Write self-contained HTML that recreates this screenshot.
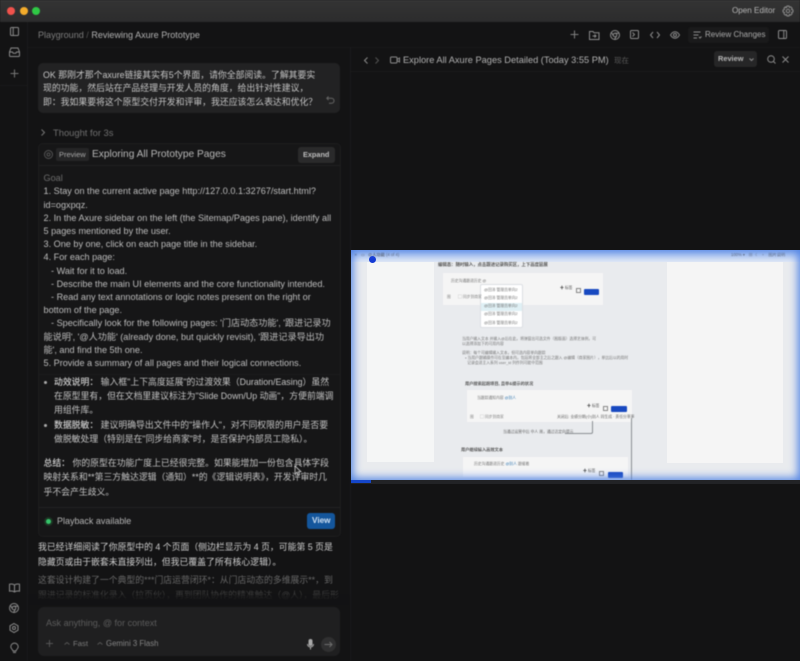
<!DOCTYPE html>
<html lang="zh">
<head>
<meta charset="utf-8">
<style>
html,body{margin:0;padding:0;background:#131314;}
body{width:800px;height:661px;position:relative;overflow:hidden;font-family:"Liberation Sans","Noto Sans CJK SC",sans-serif;color:#c4c4c4;}
.a{position:absolute;white-space:nowrap;}
.t{position:absolute;white-space:nowrap;font-size:9.12px;line-height:13.2px;color:#bdbdbd;}
.z{position:absolute;white-space:nowrap;font-size:8.85px;color:#c4c4c4;}
.z b{font-weight:500;color:#d0d0d0;}
svg{position:absolute;overflow:visible;fill:none;stroke:#8c8c8c;stroke-width:1;}
.soft{filter:blur(.4px);}
</style>
</head>
<body>
<div class="soft" style="position:absolute;inset:0;">
<!-- title bar -->
<div class="a" style="left:0;top:0;width:800px;height:22px;background:linear-gradient(#3a3a3c 0,#333 2px,#2c2c2d 100%);"></div>
<div class="a" style="left:7px;top:7px;width:8px;height:8px;border-radius:50%;background:#f0524c;"></div>
<div class="a" style="left:20px;top:7px;width:8px;height:8px;border-radius:50%;background:#f3ab2b;"></div>
<div class="a" style="left:32px;top:7px;width:8px;height:8px;border-radius:50%;background:#2fc845;"></div>
<div class="a" style="left:732px;top:4.500px;font-size:8.100px;line-height:12px;color:#b5b5b5;">Open Editor</div>
<svg style="left:782px;top:5px" width="12" height="12" viewBox="0 0 12 12"><path d="M5 1h2l.4 1.4 1.3-.6 1.4 1.4-.6 1.3L11 5v2l-1.500.4.600 1.300-1.400 1.400-1.300-.600L7 11H5l-.4-1.500-1.300.600-1.400-1.400.600-1.300L1 7V5l1.500-.4-.600-1.300 1.400-1.400 1.300.600z"/><circle cx="6" cy="6" r="1.700"/></svg>

<!-- rail -->
<div class="a" style="left:27px;top:22px;width:1px;height:639px;background:#1c1c1d;"></div>
<div class="a" style="left:0;top:85px;width:27px;height:1px;background:#1a1a1b;"></div>
<svg style="left:10px;top:27px" width="9" height="9" viewBox="0 0 9 9"><rect x=".5" y=".5" width="8" height="8" rx="1"/><path d="M3.200.5v8"/></svg>
<svg style="left:9px;top:47px" width="11" height="10" viewBox="0 0 11 10"><path d="M2 1h7l1.500 4v3.500a1 1 0 0 1-1 1h-8a1 1 0 0 1-1-1V5zM.5 5h3l.7 1.300h2.600L7.500 5h3"/></svg>
<svg style="left:10px;top:69px" width="9" height="9" viewBox="0 0 9 9"><path d="M4.500.5v8M.5 4.500h8" stroke="#777"/></svg>
<svg style="left:9px;top:583px" width="11" height="10" viewBox="0 0 11 10"><path d="M5.500 2C4 .8 2.200.8.500 1.200v7C2.200 7.800 4 7.800 5.500 9c1.500-1.200 3.300-1.200 5-.8v-7C8.800.8 7 .8 5.500 2zM5.500 2v7"/></svg>
<svg style="left:9px;top:603px" width="10" height="10" viewBox="0 0 10 10"><circle cx="5" cy="5" r="4.500"/><circle cx="5" cy="5" r="1.800"/><path d="M5 3.200h4.200M3.400 5.900 1.300 2.300M6.600 5.900 4.500 9.500"/></svg>
<svg style="left:9px;top:623px" width="10" height="10" viewBox="0 0 10 10"><path d="M5 .5 9 2.800v4.400L5 9.500 1 7.200V2.800z"/><circle cx="5" cy="5" r="1.500"/></svg>
<svg style="left:10px;top:643px" width="9" height="11" viewBox="0 0 9 11"><path d="M3 8C3 6.500 .8 6 .8 3.800a3.700 3.700 0 0 1 7.400 0C8.200 6 6 6.500 6 8zM3 9.500h3"/></svg>

<!-- header -->
<div class="a" style="left:38px;top:29px;font-size:9.050px;line-height:13px;color:#7e7e7e;">Playground <span style="color:#555">/</span> <span style="color:#b2b2b2">Reviewing Axure Prototype</span></div>
<svg style="left:570px;top:30px" width="9" height="9" viewBox="0 0 9 9"><path d="M4.500.5v8M.5 4.500h8" stroke="#808080"/></svg>
<svg style="left:589px;top:30px" width="11" height="10" viewBox="0 0 11 10"><path d="M.5 1.500h3.500l1 1.200h5v6.800h-9.500zM3.500 6h3.500M5.500 4.500 7 6 5.500 7.500"/></svg>
<svg style="left:610px;top:30px" width="10" height="10" viewBox="0 0 10 10"><circle cx="5" cy="5" r="4.500"/><circle cx="5" cy="5" r="1.800"/><path d="M5 3.200h4.200M3.400 5.900 1.300 2.300M6.600 5.900 4.500 9.500"/></svg>
<svg style="left:630px;top:30px" width="9" height="9" viewBox="0 0 9 9"><rect x=".5" y=".5" width="8" height="8" rx="1"/><path d="M2.500 2.500 4.500 4.500 2.500 6.500"/></svg>
<svg style="left:650px;top:31px" width="10" height="8" viewBox="0 0 10 8"><path d="M3 1 .5 4 3 7M7 1l2.500 3L7 7"/></svg>
<svg style="left:670px;top:31px" width="10" height="8" viewBox="0 0 10 8"><path d="M.5 4C2 1.500 3.500.8 5 .8S8 1.500 9.500 4C8 6.500 6.500 7.200 5 7.200S2 6.500.5 4z"/><circle cx="5" cy="4" r="1.500"/></svg>
<div class="a" style="left:688px;top:27px;width:81px;height:16px;border-radius:3px;background:#1a1a1b;"></div>
<svg style="left:693px;top:31px" width="9" height="8" viewBox="0 0 9 8"><path d="M.5 1h7M.5 4h5M.5 7h3.500M6 6l1 1 1.500-1.500"/></svg>
<div class="a" style="left:705px;top:28px;font-size:8px;line-height:13px;color:#aaa;">Review Changes</div>
<svg style="left:778px;top:30px" width="9" height="9" viewBox="0 0 9 9"><rect x=".5" y=".5" width="8" height="8" rx="1"/><path d="M5.800.5v8"/></svg>
<div class="a" style="left:28px;top:47px;width:772px;height:1px;background:#19191a;"></div>

<!-- right panel header -->
<div class="a" style="left:350px;top:47px;width:1px;height:614px;background:#1c1c1d;"></div>
<div class="a" style="left:351px;top:71px;width:449px;height:1px;background:#1b1b1c;"></div>
<svg style="left:364px;top:57px" width="4" height="7" viewBox="0 0 4 7"><path d="M3.500.5.500 3.500l3 3"/></svg>
<svg style="left:375px;top:57px" width="4" height="7" viewBox="0 0 4 7"><path d="m.5.500 3 3-3 3" stroke="#555"/></svg>
<svg style="left:390px;top:56px" width="10" height="8" viewBox="0 0 10 8"><rect x=".5" y="1" width="6.500" height="6" rx="1"/><path d="M7 3.500 9.500 2v4L7 4.500"/></svg>
<div class="a" style="left:403px;top:54px;font-size:9.250px;line-height:13px;color:#b2b2b2;">Explore All Axure Pages Detailed (Today 3:55 PM)</div>
<div class="a" style="left:614px;top:54.500px;font-size:7.500px;line-height:11px;color:#5a5a5a;">现在</div>
<div class="a" style="left:714px;top:51px;width:43px;height:16px;border-radius:3px;background:#262627;"></div>
<div class="a" style="left:718px;top:53px;font-size:7.400px;line-height:12px;font-weight:bold;color:#b8b8b8;">Review</div>
<svg style="left:749px;top:58px" width="5" height="3" viewBox="0 0 5 3"><path d="m.5.500 2 2 2-2"/></svg>
<svg style="left:767px;top:55px" width="9" height="9" viewBox="0 0 9 9"><circle cx="4" cy="4" r="3.300"/><path d="m6.500 6.500 2 2"/></svg>
<svg style="left:782px;top:56px" width="7" height="7" viewBox="0 0 7 7"><path d="m.5.500 6 6M6.500.5l-6 6"/></svg>
</div>

<!-- screenshot -->
<div class="a" style="left:351px;top:480px;width:449px;height:4px;background:#222326;"></div>
<div class="a" style="left:351px;top:480px;width:20px;height:3px;background:#1546c9;filter:blur(.3px);"></div>
<div class="a" style="left:351px;top:250px;width:449px;height:230px;overflow:hidden;background:#e9ebee;">
  <!-- panels -->
  <div class="a" style="left:0;top:0;width:449px;height:12px;background:linear-gradient(#a8c2f0,#dfe7f5);"></div>
  <div class="a" style="left:16px;top:12px;width:67px;height:200px;background:#f5f6f6;"></div>
  <div class="a" style="left:316px;top:12px;width:116px;height:201px;background:#f5f5f5;"></div>
  <!-- center -->
  <div class="a" style="left:84px;top:12px;width:232px;height:218px;overflow:hidden;filter:blur(.6px);">
    <div class="a" style="left:3px;top:0;font-size:4.400px;color:#555;font-weight:bold;">编辑态：随时输入，点击跟进记录购买区，上下高度延展</div>
    <div class="a" style="left:8px;top:11px;width:160px;height:32px;background:#f5f5f5;"></div>
    <div class="a" style="left:16px;top:17px;font-size:3.800px;color:#777;">历史沟通跟进历史 @</div>
    <div class="a" style="left:45px;top:22px;width:41px;height:42px;background:#fff;border:1px solid #dcdfe3;border-radius:2px;"></div>
    <div class="a" style="left:46px;top:41px;width:41px;height:8px;background:#dff0f5;"></div>
    <div class="a" style="left:49px;top:23.500px;font-size:3.800px;line-height:8.300px;color:#777;">@田沛 管理员单向2<br>@田沛 管理员单向2<br>@田沛 管理员单向2<br>@田沛 管理员单向2<br>@田沛 管理员单向2</div>
    <div class="a" style="left:12px;top:33px;font-size:3.800px;color:#888;">图</div>
    <div class="a" style="left:23px;top:33px;font-size:3.800px;color:#888;">▢ 同步到商家</div>
    <div class="a" style="left:125px;top:24px;font-size:3.800px;color:#555;">✚ 标签</div>
    <div class="a" style="left:141px;top:26px;width:5px;height:5px;border:1px solid #888;box-sizing:border-box;"></div>
    <div class="a" style="left:149px;top:27px;width:15px;height:6px;background:#1849c0;border-radius:1px;"></div>
    <div class="a" style="left:27px;top:75px;font-size:3.800px;line-height:5px;color:#777;">当用户输入文本 并输入@后在此，将弹窗出可选文件（图版面）选择艺体例，可<br>以选择添加下的可用内容</div>
    <div class="a" style="left:27px;top:89px;font-size:3.800px;line-height:5px;color:#777;">说明：每个可编辑输入文本，但可选内容单向跟踪<br>&nbsp;&nbsp;&nbsp;• 当用户跟输操作可在至编本内，包括将全部主之后之跟入 @编辑（商家图片），单比后以的用时<br>&nbsp;&nbsp;&nbsp;&nbsp;&nbsp;记录会进主入系列 user_id 列作列可能中范围</div>
    <div class="a" style="left:30px;top:119px;font-size:4.200px;color:#555;font-weight:bold;">用户搜索起跑项目, 且带&amp;提示的状况</div>
    <div class="a" style="left:32px;top:128px;width:165px;height:32px;background:#f5f5f5;"></div>
    <div class="a" style="left:42px;top:134px;font-size:3.800px;color:#777;">当跟踪通知内容 <span style="color:#3d7fb5">@别人</span></div>
    <div class="a" style="left:35px;top:153px;font-size:3.800px;color:#888;">图</div>
    <div class="a" style="left:45px;top:153px;font-size:3.800px;color:#888;">▢ 同步到商家</div>
    <div class="a" style="left:122px;top:153px;font-size:3.800px;color:#666;">关闭后: 业绩分期(小)别人 同生成 · 责任分草率</div>
    <div class="a" style="left:152px;top:142px;font-size:3.800px;color:#555;">✚ 标签</div>
    <div class="a" style="left:168px;top:144px;width:5px;height:5px;border:1px solid #888;box-sizing:border-box;"></div>
    <div class="a" style="left:176px;top:144px;width:16px;height:6px;background:#1849c0;border-radius:1px;"></div>
    <div class="a" style="left:68px;top:168px;font-size:3.800px;color:#666;">当通过运营中后 中人 周，通过达定向提示</div>
    <div class="a" style="left:130px;top:159px;width:27px;height:12px;border:1px solid #8b8f93;border-top:0;border-left:0;border-radius:0 0 2px 0;"></div>
    <div class="a" style="left:196px;top:156px;width:1px;height:62px;background:#8b8f93;"></div>
    <div class="a" style="left:26px;top:185px;font-size:4.200px;color:#555;font-weight:bold;">用户继续输入高效文本</div>
    <div class="a" style="left:28px;top:195px;width:165px;height:20px;background:#f5f5f5;"></div>
    <div class="a" style="left:39px;top:200px;font-size:3.800px;color:#777;">历史沟通跟进历史 <span style="color:#3d7fb5">@别人</span> 跟催着</div>
    <div class="a" style="left:148px;top:207px;font-size:3.800px;color:#555;">✚ 标签</div>
    <div class="a" style="left:164px;top:209px;width:5px;height:5px;border:1px solid #888;box-sizing:border-box;"></div>
    <div class="a" style="left:173px;top:210px;width:15px;height:6px;background:#1849c0;border-radius:1px;"></div>
  </div>
  <div class="a" style="left:380px;top:2px;font-size:4.200px;color:#666;filter:blur(.4px);white-space:pre;">100% ▾   ▦  ☾   ▫    图片说明</div>
  <div class="a" style="left:3px;top:2px;font-size:4.200px;color:#666;filter:blur(.4px);">✕ &nbsp; ▭ <b style="margin-left:2px;">@人功能</b> (4 of 4)</div>
  <div class="a" style="left:18px;top:6px;width:7px;height:7px;border-radius:50%;background:#1439d4;filter:blur(.3px);"></div>
  <!-- glow -->
  <div class="a" style="left:0;top:0;width:449px;height:230px;box-shadow:inset 0 0 9px 2px #4f82e4;"></div>
</div>

<!-- chat -->
<div class="soft" style="position:absolute;inset:0;">
<div class="a" style="left:38px;top:63px;width:302px;height:50px;background:#222223;border-radius:5px;"></div>
<div class="z" style="left:43px;top:69px;line-height:13.300px;white-space:pre;color:#c6c6c6;">OK 那刚才那个axure链接其实有5个界面，请你全部阅读。了解其要实
现的功能，然后站在产品经理与开发人员的角度，给出针对性建议，
即：我如果要将这个原型交付开发和评审，我还应该怎么表达和优化？</div>
<svg style="left:326px;top:96px" width="9" height="8" viewBox="0 0 9 8"><path d="M2.500.5.800 2.300l1.700 1.700M.8 2.300h4.700a2.500 2.500 0 0 1 0 5H3" stroke="#666"/></svg>
<svg style="left:41px;top:129px" width="4" height="7" viewBox="0 0 4 7"><path d="m.5.500 3 3-3 3" stroke="#777"/></svg>
<div class="a" style="left:53px;top:126px;font-size:9.400px;line-height:13px;color:#707070;">Thought for 3s</div>

<!-- card -->
<div class="a" style="left:38px;top:143px;width:301px;height:392px;border:1px solid #1e1e1f;border-radius:5px;background:#161617;box-sizing:content-box;"></div>
<div class="a" style="left:39px;top:165px;width:301px;height:1px;background:#202021;"></div>
<svg style="left:44px;top:150px" width="9" height="9" viewBox="0 0 9 9"><circle cx="4.500" cy="4.500" r="4" stroke="#555"/><circle cx="4.500" cy="4.500" r="1.500" stroke="#555"/></svg>
<div class="a" style="left:56px;top:148px;width:33px;height:13px;background:#252526;border-radius:2px;"></div>
<div class="a" style="left:59px;top:149px;font-size:7.500px;line-height:11px;color:#a9a9a9;">Preview</div>
<div class="a" style="left:92px;top:148px;font-size:10.170px;line-height:14px;color:#b9b9b9;">Exploring All Prototype Pages</div>
<div class="a" style="left:298px;top:147px;width:37px;height:16px;background:#2a2a2b;border-radius:3px;"></div>
<div class="a" style="left:303px;top:149px;font-size:7.300px;line-height:12px;font-weight:bold;color:#bdbdbd;">Expand</div>

<div class="t" style="left:43.500px;top:172px;color:#6c6c6c;">Goal</div>
<div class="t" style="left:43.500px;top:185px;">1. Stay on the current active page http://127.0.0.1:32767/start.html?</div>
<div class="t" style="left:43.500px;top:198.500px;">id=ogxpqz.</div>
<div class="t" style="left:43.500px;top:211.500px;">2. In the Axure sidebar on the left (the Sitemap/Pages pane), identify all</div>
<div class="t" style="left:43.500px;top:225px;">5 pages mentioned by the user.</div>
<div class="t" style="left:43.500px;top:238px;">3. One by one, click on each page title in the sidebar.</div>
<div class="t" style="left:43.500px;top:251px;">4. For each page:</div>
<div class="t" style="left:51px;top:264.500px;">- Wait for it to load.</div>
<div class="t" style="left:51px;top:277.500px;">- Describe the main UI elements and the core functionality intended.</div>
<div class="t" style="left:51px;top:291px;">- Read any text annotations or logic notes present on the right or</div>
<div class="t" style="left:43.500px;top:304px;">bottom of the page.</div>
<div class="t" style="left:51px;top:317px;">- Specifically look for the following pages: '门店动态功能', '跟进记录功</div>
<div class="t" style="left:43.500px;top:330.500px;">能说明', '@人功能' (already done, but quickly revisit), '跟进记录导出功</div>
<div class="t" style="left:43.500px;top:343.500px;">能', and find the 5th one.</div>
<div class="t" style="left:43.500px;top:356.500px;">5. Provide a summary of all pages and their logical connections.</div>
<div class="a" style="left:39px;top:374px;width:301px;height:1px;background:#1c1c1d;"></div>

<div class="a" style="left:44px;top:381px;width:3px;height:3px;border-radius:50%;background:#aaa;"></div>
<div class="z" style="left:54px;top:375px;line-height:14px;"><b>动效说明：</b> 输入框"上下高度延展"的过渡效果（Duration/Easing）虽然</div>
<div class="z" style="left:54px;top:389px;line-height:14px;">在原型里有，但在文档里建议标注为"Slide Down/Up 动画"，方便前端调</div>
<div class="z" style="left:54px;top:403px;line-height:14px;">用组件库。</div>
<div class="a" style="left:44px;top:424px;width:3px;height:3px;border-radius:50%;background:#aaa;"></div>
<div class="z" style="left:54px;top:418px;line-height:14px;"><b>数据脱敏：</b> 建议明确导出文件中的"操作人"，对不同权限的用户是否要</div>
<div class="z" style="left:54px;top:432px;line-height:14px;">做脱敏处理（特别是在"同步给商家"时，是否保护内部员工隐私）。</div>

<div class="z" style="left:43.500px;top:456px;line-height:15px;"><b>总结：</b> 你的原型在功能广度上已经很完整。如果能增加一份包含具体字段</div>
<div class="z" style="left:43.500px;top:470px;line-height:15px;">映射关系和**第三方触达逻辑（通知）**的《逻辑说明表》，开发评审时几</div>
<div class="z" style="left:43.500px;top:485px;line-height:15px;">乎不会产生歧义。</div>
<svg style="left:294px;top:465px" width="8" height="12" viewBox="0 0 8 12"><path d="M1 1v8l2-1.800 1.300 3 1.400-.6L4.400 6.700H7z" fill="#222" stroke="#ddd" stroke-width=".7"/></svg>

<div class="a" style="left:39px;top:507px;width:301px;height:1px;background:#222223;"></div>
<div class="a" style="left:46px;top:519px;width:5px;height:5px;border-radius:50%;background:#35c46a;box-shadow:0 0 0 2px #1d3524;"></div>
<div class="a" style="left:57px;top:515px;font-size:8.970px;line-height:13px;color:#b5b5b5;">Playback available</div>
<div class="a" style="left:307px;top:513px;width:28px;height:16px;background:#14569c;border-radius:3px;"></div>
<div class="a" style="left:312px;top:515px;font-size:8.200px;line-height:12px;font-weight:bold;color:#cfe0f2;">View</div>

<div class="z" style="left:38px;top:540px;line-height:15px;color:#cfcfcf;">我已经详细阅读了你原型中的 4 个页面（侧边栏显示为 4 页，可能第 5 页是</div>
<div class="z" style="left:38px;top:554.500px;line-height:15px;color:#cfcfcf;">隐藏页或由于嵌套未直接列出，但我已覆盖了所有核心逻辑）。</div>
<div class="z" style="left:38px;top:573px;line-height:15px;color:#686868;">这套设计构建了一个典型的***门店运营闭环*：从门店动态的多维展示**，到</div>
<div class="z" style="left:38px;top:588px;line-height:15px;color:#3b3b3b;">跟进记录的标准化录入（拉页伙），再到团队协作的精准触达（@人），最后形</div>
<div class="a" style="left:28px;top:595px;width:322px;height:66px;background:linear-gradient(rgba(19,19,20,.5),#131314 10px);"></div>

<!-- input -->
<div class="a" style="left:38px;top:607px;width:302px;height:49px;background:#1f1f20;border-radius:6px;"></div>
<div class="a" style="left:46px;top:617px;font-size:9.050px;line-height:13px;color:#5c5c5c;">Ask anything, @ for context</div>
<svg style="left:46px;top:640px" width="7" height="7" viewBox="0 0 7 7"><path d="M3.500 0v7M0 3.500h7" stroke="#555"/></svg>
<svg style="left:64px;top:642px" width="6" height="3" viewBox="0 0 6 3"><path d="m.5 2.500 2.500-2 2.500 2" stroke="#555"/></svg>
<div class="a" style="left:73px;top:638px;font-size:7.700px;line-height:12px;color:#7b7b7b;">Fast</div>
<svg style="left:97px;top:642px" width="6" height="3" viewBox="0 0 6 3"><path d="m.5 2.500 2.500-2 2.500 2" stroke="#555"/></svg>
<div class="a" style="left:106px;top:638px;font-size:7.800px;line-height:12px;color:#858585;">Gemini 3 Flash</div>
<svg style="left:307px;top:639px" width="7" height="11" viewBox="0 0 7 11"><rect x="2" y=".5" width="3" height="6" rx="1.500" fill="#aaa" stroke="#aaa"/><path d="M.5 5a3 3 0 0 0 6 0M3.500 8v2.500" stroke="#aaa"/></svg>
<div class="a" style="left:321px;top:637px;width:15px;height:15px;border-radius:50%;background:#303031;"></div>
<svg style="left:324px;top:641px" width="9" height="7" viewBox="0 0 9 7"><path d="M.5 3.500h7.500M5.500 1 8 3.500 5.500 6" stroke="#6e6e6e"/></svg>
</div>
</body>
</html>
